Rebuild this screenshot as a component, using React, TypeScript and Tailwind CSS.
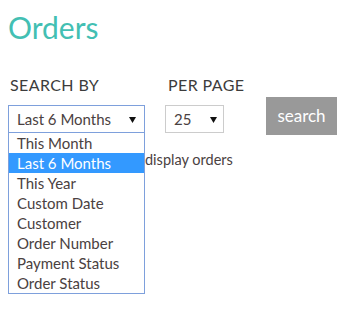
import React from "react";

const items = [
  "This Month",
  "Last 6 Months",
  "This Year",
  "Custom Date",
  "Customer",
  "Order Number",
  "Payment Status",
  "Order Status",
];

function Arrow() {
  return (
    <svg width="7" height="7" viewBox="0 0 7 7" className="block">
      <path d="M0 1 L7 1 L3.5 7 Z" fill="#111" />
    </svg>
  );
}

export default function App() {
  return (
    <div
      className="w-[362px] h-[327px] bg-white relative overflow-hidden"
      style={{ fontFamily: "Lato, 'Open Sans', sans-serif" }}
    >
      <h1 className="text-[30px] leading-none text-[#43bfb3] pl-[8px] pt-[12px] font-normal">
        Orders
      </h1>
      <div className="flex items-end pl-[8px] pt-[35px]">
        <div className="flex flex-col w-[137px]">
          <div className="text-[16px] tracking-[0.4px] leading-none text-[#3c3c3c] pl-[2px] pb-[12px] whitespace-nowrap">
            SEARCH BY
          </div>
          <div className="relative w-[137px] h-[28px]">
            <div className="w-full h-full border border-[#7ea0dc] flex items-center justify-between pl-[8px] pr-[8px] text-[15px] text-[#4a4141]">
              <span>Last 6 Months</span>
              <Arrow />
            </div>
            <div className="absolute left-0 top-[28px] w-[137px] border border-[#7ea0dc] border-t-0 bg-white z-10">
              {items.map((t) => (
                <div
                  key={t}
                  className={
                    "h-[20px] leading-[20px] pl-[8px] text-[15px] " +
                    (t === "Last 6 Months"
                      ? "bg-[#3399ff] text-white"
                      : "text-[#4a4141]")
                  }
                >
                  {t}
                </div>
              ))}
            </div>
          </div>
        </div>
        <div className="flex flex-col ml-[20px] w-[59px]">
          <div className="text-[16px] tracking-[0.4px] leading-none text-[#3c3c3c] pl-[3px] pb-[12px] whitespace-nowrap">
            PER PAGE
          </div>
          <div className="w-[59px] h-[28px] border border-[#cccccc] flex items-center justify-between pl-[8px] pr-[6px] text-[15px] text-[#4a4141]">
            <span>25</span>
            <Arrow />
          </div>
        </div>
        <button className="ml-[42px] mb-[-2px] w-[71px] h-[38px] bg-[#999999] text-white text-[17px]">
          search
        </button>
      </div>
      <p className="pl-[8px] pt-[16px] text-[14.5px] text-[#4a4141] whitespace-nowrap">
        <span className="inline-block w-[137px]" />
        display orders
      </p>
    </div>
  );
}
